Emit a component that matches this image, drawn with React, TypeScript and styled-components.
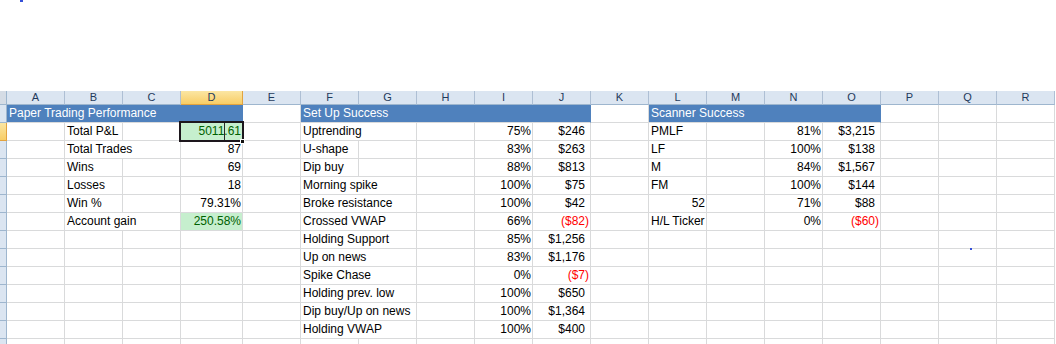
import React from "react";
import styled, { createGlobalStyle } from "styled-components";

const GlobalStyle = createGlobalStyle`
  html, body { margin: 0; padding: 0; background: #ffffff; }
  body {
    font-family: "Liberation Sans", Arial, sans-serif;
    font-size: 12px;
    color: #000000;
  }
`;

const GRID = "#d9dadb";
const HEAD_LINE = "#9eb6ce";
const HEAD_BG = "#dbe5f1";
const ACTIVE_BG = "linear-gradient(#fbe6a3, #f8cd66)";
const ACTIVE_LINE = "#e2a33f";

const Page = styled.div`
  position: relative;
  width: 1056px;
  height: 344px;
  overflow: hidden;
  padding-top: 91px;
  box-sizing: border-box;
`;

const Sheet = styled.div`
  display: grid;
  grid-template-columns: 7px repeat(3, 58px) 62px repeat(14, 58px);
  grid-template-rows: 14px;
  grid-auto-rows: 18px;
`;

const Corner = styled.div`
  box-sizing: border-box;
  background: #d5dce5;
  border-right: 1px solid ${HEAD_LINE};
  border-bottom: 1px solid ${HEAD_LINE};
`;

const ColHead = styled.div<{ $active?: boolean }>`
  box-sizing: border-box;
  background: ${(p) => (p.$active ? ACTIVE_BG : HEAD_BG)};
  border-right: 1px solid ${(p) => (p.$active ? ACTIVE_LINE : "#aebfd4")};
  border-bottom: 1px solid ${(p) => (p.$active ? ACTIVE_LINE : HEAD_LINE)};
  color: #1f3a5c;
  font-size: 11px;
  line-height: 13px;
  text-align: center;
`;

const RowHead = styled.div<{ $active?: boolean }>`
  box-sizing: border-box;
  background: ${(p) => (p.$active ? ACTIVE_BG : HEAD_BG)};
  border-right: 1px solid ${(p) => (p.$active ? ACTIVE_LINE : HEAD_LINE)};
  border-bottom: 1px solid ${(p) => (p.$active ? ACTIVE_LINE : HEAD_LINE)};
`;

const Cell = styled.div<{
  $span: number;
  $right?: boolean;
  $band?: boolean;
  $good?: boolean;
  $neg?: boolean;
  $selected?: boolean;
}>`
  grid-column: span ${(p) => p.$span};
  box-sizing: border-box;
  border-right: 1px solid ${(p) => (p.$band ? "#4f81bd" : GRID)};
  border-bottom: 1px solid ${GRID};
  padding: 0 1px 0 2px;
  line-height: 17px;
  white-space: nowrap;
  text-align: ${(p) => (p.$right ? "right" : "left")};
  background: ${(p) =>
    p.$band ? "#4f81bd" : p.$good ? "#c6efce" : "transparent"};
  color: ${(p) =>
    p.$band ? "#ffffff" : p.$good ? "#006100" : p.$neg ? "#ff0000" : "#000000"};
  position: ${(p) => (p.$selected ? "relative" : "static")};
  z-index: ${(p) => (p.$selected ? 2 : "auto")};
`;

const Ghost = styled.span`
  visibility: hidden;
`;

const SelectionFrame = styled.div`
  position: absolute;
  inset: -2px;
  border: 2px solid #1d171d;
  pointer-events: none;
`;

const FillHandle = styled.div`
  position: absolute;
  right: -3px;
  bottom: -4px;
  width: 5px;
  height: 5px;
  background: #111111;
  border: 1px solid #ffffff;
  box-sizing: border-box;
`;

const EditCaret = styled.div`
  position: absolute;
  left: 43px;
  top: 0;
  bottom: 0;
  width: 1px;
  background: #2a2a2a;
`;

const Speck = styled.div<{ $x: number; $y: number; $w: number; $h: number }>`
  position: absolute;
  left: ${(p) => p.$x}px;
  top: ${(p) => p.$y}px;
  width: ${(p) => p.$w}px;
  height: ${(p) => p.$h}px;
  background: #3550d8;
`;

type Spec = {
  t?: string;
  span?: number;
  band?: boolean;
  good?: boolean;
  selected?: boolean;
};

const E: Spec = {};
const empties = (n: number): Spec[] => Array.from({ length: n }, () => E);
const L = (t: string, span = 1): Spec => ({ t, span });

const setupRow = (name: string, pct: string, amt: string): Spec[] => [
  ...empties(5),
  L(name, 2),
  E,
  L(pct),
  L(amt),
  ...empties(8),
];

const rows: Spec[][] = [
  [
    { t: "Paper Trading Performance", span: 4, band: true },
    E,
    { t: "Set Up Success", span: 5, band: true },
    E,
    { t: "Scanner Success", span: 4, band: true },
    ...empties(3),
  ],
  [
    E, L("Total P&L"), E, { t: "5011.61", good: true, selected: true }, E,
    L("Uptrending", 2), E, L("75%"), L("$246"), E,
    L("PMLF"), E, L("81%"), L("$3,215"), ...empties(3),
  ],
  [
    E, L("Total Trades", 2), L("87"), E,
    L("U-shape"), E, E, L("83%"), L("$263"), E,
    L("LF"), E, L("100%"), L("$138"), ...empties(3),
  ],
  [
    E, L("Wins"), E, L("69"), E,
    L("Dip buy"), E, E, L("88%"), L("$813"), E,
    L("M"), E, L("84%"), L("$1,567"), ...empties(3),
  ],
  [
    E, L("Losses"), E, L("18"), E,
    L("Morning spike", 2), E, L("100%"), L("$75"), E,
    L("FM"), E, L("100%"), L("$144"), ...empties(3),
  ],
  [
    E, L("Win %"), E, L("79.31%"), E,
    L("Broke resistance", 2), E, L("100%"), L("$42"), E,
    L("52"), E, L("71%"), L("$88"), ...empties(3),
  ],
  [
    E, L("Account gain", 2), { t: "250.58%", good: true }, E,
    L("Crossed VWAP", 2), E, L("66%"), L("($82)"), E,
    L("H/L Ticker"), E, L("0%"), L("($60)"), ...empties(3),
  ],
  setupRow("Holding Support", "85%", "$1,256"),
  setupRow("Up on news", "83%", "$1,176"),
  setupRow("Spike Chase", "0%", "($7)"),
  setupRow("Holding prev. low", "100%", "$650"),
  setupRow("Dip buy/Up on news", "100%", "$1,364"),
  setupRow("Holding VWAP", "100%", "$400"),
  empties(18),
];

const letters = "ABCDEFGHIJKLMNOPQR".split("");
const ACTIVE_COL = "D";
const ACTIVE_ROW = 1;

const isNumeric = (t?: string) => !!t && /^[\d$(]/.test(t);

function SheetCell({ spec }: { spec: Spec }) {
  const t = spec.t;
  const right = isNumeric(t);
  const money = !!t && t.startsWith("$");
  const neg = !!t && t.startsWith("(");
  return (
    <Cell
      $span={spec.span ?? 1}
      $right={right}
      $band={spec.band}
      $good={spec.good}
      $neg={neg}
      $selected={spec.selected}
    >
      {t}
      {money && <Ghost>)</Ghost>}
      {spec.selected && (
        <>
          <EditCaret />
          <SelectionFrame />
          <FillHandle />
        </>
      )}
    </Cell>
  );
}

export default function App() {
  return (
    <>
      <GlobalStyle />
      <Page>
        <Sheet>
          <Corner />
          {letters.map((l) => (
            <ColHead key={l} $active={l === ACTIVE_COL}>
              {l}
            </ColHead>
          ))}
          {rows.map((row, ri) => (
            <React.Fragment key={ri}>
              <RowHead $active={ri === ACTIVE_ROW} />
              {row.map((spec, ci) => (
                <SheetCell key={ci} spec={spec} />
              ))}
            </React.Fragment>
          ))}
        </Sheet>
        <Speck $x={20} $y={0} $w={3} $h={2} />
        <Speck $x={970} $y={248} $w={2} $h={2} />
      </Page>
    </>
  );
}
